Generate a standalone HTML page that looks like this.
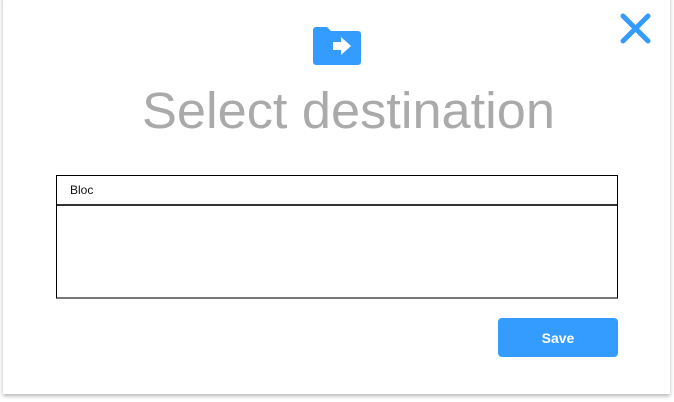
<!DOCTYPE html>
<html><head><meta charset="utf-8"><style>
html,body{margin:0;padding:0;width:674px;height:402px;background:#fff;overflow:hidden;font-family:"Liberation Sans",sans-serif}
.card{position:absolute;left:3px;top:-4px;width:667px;height:398px;background:#fff;box-shadow:0 2px 4px rgba(0,0,0,.3);}
.box{position:absolute;left:56px;top:175px;width:560px;height:121px;border:1px solid #000;border-bottom:2px solid #777}
.hdr{height:30px;border-bottom:2px solid #333;box-sizing:border-box;font-size:12px;line-height:29px;padding-left:13px;color:#111}
.btn{position:absolute;left:498px;top:318px;width:120px;height:39px;background:#359cff;border-radius:4px;color:#fff;font-size:14px;font-weight:bold;text-align:center;line-height:40px}
</style></head><body>
<div class="card"></div>
<svg style="position:absolute;left:0;top:0" width="674" height="402">
<path d="M316 27h11l4 4h27a3 3 0 0 1 3 3v28a3 3 0 0 1-3 3h-42a3 3 0 0 1-3-3v-32a3 3 0 0 1 3-3z" fill="#359cff"/>
<path d="M333 42h8v-5l10 9-10 9v-5h-8z" fill="#fff"/>
<path d="M623 16l25 25M648 16l-25 25" stroke="#359cff" stroke-width="5" stroke-linecap="round"/>
<text x="142" y="128" font-family="Liberation Sans" font-size="51" fill="#aaa" textLength="413" lengthAdjust="spacingAndGlyphs">Select destination</text>
</svg>
<div class="box"><div class="hdr">Bloc</div></div>
<div class="btn">Save</div>
</body></html>
